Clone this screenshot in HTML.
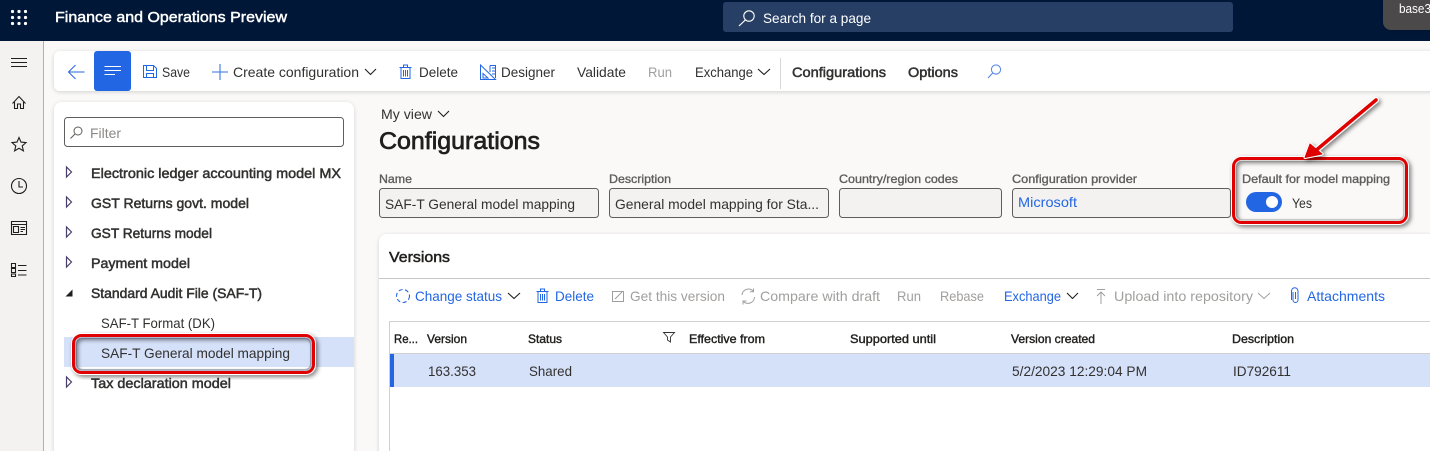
<!DOCTYPE html>
<html lang="en"><head><meta charset="utf-8"><title>Configurations</title>
<style>
html,body{margin:0;padding:0;width:1430px;height:451px;overflow:hidden;background:#faf9f8}
svg{display:block}
text{font-family:"Liberation Sans",sans-serif;font-size:14px;fill:#323130;white-space:pre}
.sb{stroke:#323130;stroke-width:.5px}
.d{fill:#a19f9d}
.b{fill:#2266e3}
.k{fill:#201f1e}
.l{font-size:12px;fill:#605e5c;stroke:#605e5c;stroke-width:.35px}
.h{font-size:12px;fill:#201f1e;stroke:#201f1e;stroke-width:.4px}
.ic{fill:none;stroke:#2266e3;stroke-width:1}
.ig{fill:none;stroke:#a19f9d;stroke-width:1}
.ir{fill:none;stroke:#201f1e;stroke-width:1.1}
.f{fill:#f3f2f1;stroke:#605e5c;stroke-width:1}
</style></head><body>
<svg width="1430" height="451" viewBox="0 0 1430 451" xmlns="http://www.w3.org/2000/svg">
<defs>
<filter id="s1" x="-5%" y="-30%" width="110%" height="170%"><feDropShadow dx="0" dy="1" stdDeviation="2" flood-color="#000" flood-opacity=".16"/></filter>
<filter id="s2" x="-20%" y="-20%" width="140%" height="140%"><feDropShadow dx="2" dy="2" stdDeviation="2" flood-color="#000" flood-opacity=".5"/></filter>
</defs>
<rect width="1430" height="451" fill="#faf9f8"/>
<!-- rail -->
<rect x="0" y="41" width="43" height="410" fill="#f3f2f1"/>
<rect x="43" y="41" width="1" height="410" fill="#b3b0ad"/>
<!-- top bar -->
<rect width="1430" height="41" fill="#001738"/>
<g fill="#fff"><circle cx="12.5" cy="11.5" r="1.6"/><circle cx="19" cy="11.5" r="1.6"/><circle cx="25.5" cy="11.5" r="1.6"/><circle cx="12.5" cy="17.5" r="1.6"/><circle cx="19" cy="17.5" r="1.6"/><circle cx="25.5" cy="17.5" r="1.6"/><circle cx="12.5" cy="23.5" r="1.6"/><circle cx="19" cy="23.5" r="1.6"/><circle cx="25.5" cy="23.5" r="1.6"/></g>
<text x="55" y="22" textLength="232" lengthAdjust="spacingAndGlyphs" style="font-size:15px;fill:#fff;stroke:#fff;stroke-width:.45px">Finance and Operations Preview</text>
<rect x="723" y="2" width="510" height="30" rx="3" fill="#273f64"/>
<circle cx="749" cy="16" r="5.2" fill="none" stroke="#fff" stroke-width="1.1"/><path d="M745.3 20L739 26" stroke="#fff" stroke-width="1.2" fill="none"/>
<text x="763" y="23" textLength="108" lengthAdjust="spacingAndGlyphs" style="fill:#fff">Search for a page</text>
<path d="M1383 -2H1430V30H1391a8 8 0 0 1-8-8Z" fill="#4b4a49" filter="url(#s1)"/>
<text x="1399" y="13" textLength="32" lengthAdjust="spacingAndGlyphs" style="font-size:12.5px;fill:#fff">base3</text>
<!-- rail icons -->
<path d="M11 58.5H27M11 62.5H27M11 66.5H27" stroke="#201f1e" stroke-width="1"/>
<path class="ir" d="M12.5 103.5L19 96.5L25.5 103.5M14.5 102V108.5H17.5V104H20.5V108.5H23.5V102"/>
<path class="ir" d="M19 137.5l2 4.6 5 .5-3.8 3.3 1.2 5-4.4-2.6-4.4 2.6 1.2-5-3.8-3.3 5-.5z"/>
<circle class="ir" cx="19" cy="186" r="7.5"/><path class="ir" d="M19 181V187H23"/>
<path class="ir" d="M11.5 221.5H26.5V234.5H11.5ZM11.5 224.5H26.5"/><path class="ir" d="M13.5 226.5H18.5V232.5H13.5ZM20.5 227.5H25M20.5 229.5H25M20.5 231.5H23" stroke-width=".9"/>
<path class="ir" d="M11.5 263.5H15.5V267.5H11.5ZM11.5 268.5H15.5V272.5H11.5ZM11.5 274H15.5V276.5H11.5ZM18 265.5H26.5M18 270.5H26.5M18 275H26.5" stroke-width=".9"/>
<!-- action bar -->
<rect x="54" y="51" width="1390" height="40" rx="6" fill="#fff" filter="url(#s1)"/>
<path class="ic" d="M84.5 72H68.5M75.5 65L68.5 72L75.5 79" stroke="#5b8ae8" stroke-width="1.2"/>
<rect x="94" y="51" width="37" height="40" rx="3" fill="#2266e3"/>
<path d="M104.5 66.5H121M104.5 70.5H121M104.5 74.5H115" stroke="#fff" stroke-width="1" fill="none"/>
<path class="ic" d="M143.5 65.5H153.5L156.5 68.5V77.5H143.5ZM146.5 65.5V70.5H153.5V65.5M146.5 77.5V73.5H153.5V77.5"/>
<text x="162" y="77" textLength="28" lengthAdjust="spacingAndGlyphs">Save</text>
<path d="M212 72H228M220 64V80" stroke="#5b8ae8" stroke-width="1.3" fill="none"/>
<text x="233" y="77" textLength="126" lengthAdjust="spacingAndGlyphs">Create configuration</text>
<path d="M365 69L370.5 74.5L376 69" class="ir" stroke="#323130"/>
<path class="ic" d="M399.5 67.5H411.5M401 67.5V78.5H410V67.5M403.5 67.5V65H407.5V67.5M403.5 70V76.5M405.5 70V76.5M407.5 70V76.5"/>
<text x="419" y="77" textLength="39" lengthAdjust="spacingAndGlyphs">Delete</text>
<path class="ic" d="M480.5 65L495.5 79.5H480.5ZM483 73.5L488 78H483ZM490 65.5H495.5V78M490 65.5V72M492 68H495M492 71H495M492 74H495"/>
<text x="501" y="77" textLength="54" lengthAdjust="spacingAndGlyphs">Designer</text>
<text x="577" y="77" textLength="49" lengthAdjust="spacingAndGlyphs">Validate</text>
<text class="d" x="648" y="77" textLength="24" lengthAdjust="spacingAndGlyphs">Run</text>
<text x="695" y="77" textLength="58" lengthAdjust="spacingAndGlyphs">Exchange</text>
<path d="M758 69L764 74.5L770 69" class="ir" stroke="#323130"/>
<rect x="780" y="58" width="1" height="31" fill="#d8d6d4"/>
<text class="sb" x="792" y="77" textLength="94" lengthAdjust="spacingAndGlyphs">Configurations</text>
<text class="sb" x="908" y="77" textLength="50" lengthAdjust="spacingAndGlyphs">Options</text>
<circle cx="996" cy="69.5" r="4.6" fill="none" stroke="#5b8ae8" stroke-width="1.1"/><path d="M992.7 73L988 78" stroke="#5b8ae8" stroke-width="1.2" fill="none"/>
<!-- left panel -->
<path d="M54 110a8 8 0 0 1 8-8H346a8 8 0 0 1 8 8V460H54Z" fill="#fff" filter="url(#s1)"/>
<rect x="64.5" y="117.5" width="279" height="29" rx="3" fill="#fff" stroke="#605e5c"/>
<circle cx="78" cy="131" r="4" fill="none" stroke="#605e5c"/><path d="M75 134L70.5 138.5" stroke="#605e5c" fill="none" stroke-width="1.1"/>
<text x="90" y="138" textLength="31" lengthAdjust="spacingAndGlyphs" style="fill:#8a8886">Filter</text>
<rect x="64" y="337" width="290" height="30" fill="#d5e1f9"/>
<g fill="none" stroke="#4a3f6b" stroke-width="1.2"><path d="M66.5 167V177L71.5 172Z"/><path d="M66.5 197V207L71.5 202Z"/><path d="M66.5 227V237L71.5 232Z"/><path d="M66.5 257V267L71.5 262Z"/><path d="M66.5 377V387L71.5 382Z"/></g>
<path d="M65.5 296.5H72.5V289.5Z" fill="#201f1e"/>
<text class="sb" x="91" y="178" textLength="250" lengthAdjust="spacingAndGlyphs">Electronic ledger accounting model MX</text>
<text class="sb" x="91" y="208" textLength="158" lengthAdjust="spacingAndGlyphs">GST Returns govt. model</text>
<text class="sb" x="91" y="238" textLength="121" lengthAdjust="spacingAndGlyphs">GST Returns model</text>
<text class="sb" x="91" y="268" textLength="99" lengthAdjust="spacingAndGlyphs">Payment model</text>
<text class="sb" x="91" y="298" textLength="171" lengthAdjust="spacingAndGlyphs">Standard Audit File (SAF-T)</text>
<text x="101" y="328" textLength="114" lengthAdjust="spacingAndGlyphs">SAF-T Format (DK)</text>
<text x="101" y="358" textLength="189" lengthAdjust="spacingAndGlyphs">SAF-T General model mapping</text>
<text class="sb" x="91" y="388" textLength="140" lengthAdjust="spacingAndGlyphs">Tax declaration model</text>
<!-- header -->
<text x="381" y="119" textLength="51" lengthAdjust="spacingAndGlyphs">My view</text>
<path d="M438 111L443.5 116.5L449 111" class="ir" stroke="#323130"/>
<text x="379" y="149" textLength="161" lengthAdjust="spacingAndGlyphs" style="font-size:24px;fill:#201f1e;stroke:#201f1e;stroke-width:.7px">Configurations</text>
<text class="l" x="379" y="183" textLength="33" lengthAdjust="spacingAndGlyphs">Name</text>
<text class="l" x="609" y="183" textLength="62" lengthAdjust="spacingAndGlyphs">Description</text>
<text class="l" x="839" y="183" textLength="119" lengthAdjust="spacingAndGlyphs">Country/region codes</text>
<text class="l" x="1012" y="183" textLength="125" lengthAdjust="spacingAndGlyphs">Configuration provider</text>
<rect class="f" x="379.5" y="188.5" width="219" height="29" rx="3"/>
<rect class="f" x="609.5" y="188.5" width="219" height="29" rx="3"/>
<rect class="f" x="839.5" y="188.5" width="162" height="29" rx="3"/>
<rect class="f" x="1012.5" y="188.5" width="218" height="29" rx="3"/>
<text x="385" y="209" textLength="190" lengthAdjust="spacingAndGlyphs">SAF-T General model mapping</text>
<text x="615" y="209" textLength="204" lengthAdjust="spacingAndGlyphs">General model mapping for Sta...</text>
<text class="b" x="1018" y="207" textLength="59" lengthAdjust="spacingAndGlyphs">Microsoft</text>
<text class="l" x="1242" y="183" textLength="148" lengthAdjust="spacingAndGlyphs">Default for model mapping</text>
<rect x="1246" y="192" width="36" height="20" rx="10" fill="#2266e3"/>
<circle cx="1272" cy="202" r="6" fill="#fff"/>
<text x="1292" y="208" textLength="20" lengthAdjust="spacingAndGlyphs">Yes</text>
<!-- versions panel -->
<path d="M379 242a8 8 0 0 1 8-8H1440V460H379Z" fill="#fff" filter="url(#s1)"/>
<text x="389" y="262" textLength="61" lengthAdjust="spacingAndGlyphs" style="font-size:15px;fill:#201f1e;stroke:#201f1e;stroke-width:.5px">Versions</text>
<rect x="379" y="278" width="1051" height="1" fill="#c8c6c4"/>
<circle cx="403" cy="296" r="6.5" fill="none" stroke="#2266e3" stroke-width="1.1" stroke-dasharray="4 2.5"/>
<text class="b" x="415" y="301" textLength="87" lengthAdjust="spacingAndGlyphs">Change status</text>
<path d="M508 293L514 298.5L520 293" class="ir" stroke="#323130"/>
<path class="ic" d="M536.5 291.5H548.5M538 291.5V302.5H547V291.5M540.5 291.5V289H544.5V291.5M540.5 294V300.5M542.5 294V300.5M544.5 294V300.5"/>
<text class="b" x="555" y="301" textLength="39" lengthAdjust="spacingAndGlyphs">Delete</text>
<path class="ig" d="M612.5 291.5H623.5V301.5H612.5ZM615 299L622 292"/>
<text class="d" x="630" y="301" textLength="95" lengthAdjust="spacingAndGlyphs">Get this version</text>
<path class="ig" d="M742 295a6.5 6.5 0 0 1 11.5-3.5M754.5 297a6.5 6.5 0 0 1-11.5 4M753.5 288.5V291.8H750M743 304.5V301H746.5"/>
<text class="d" x="760" y="301" textLength="120" lengthAdjust="spacingAndGlyphs">Compare with draft</text>
<text class="d" x="897" y="301" textLength="24" lengthAdjust="spacingAndGlyphs">Run</text>
<text class="d" x="940" y="301" textLength="44" lengthAdjust="spacingAndGlyphs">Rebase</text>
<text class="b" x="1004" y="301" textLength="57" lengthAdjust="spacingAndGlyphs">Exchange</text>
<path d="M1067 293L1072.5 298.5L1078 293" class="ir" stroke="#323130"/>
<path class="ig" d="M1097 289.5H1105M1101 304V292M1097 296L1101 292L1105 296"/>
<text class="d" x="1114" y="301" textLength="139" lengthAdjust="spacingAndGlyphs">Upload into repository</text>
<path d="M1258 293L1264 298.5L1270 293" class="ig"/>
<path class="ic" d="M1293 292V300a2.5 2.5 0 0 0 5 0V291a3 3 0 0 0-6.5 0V300M1295.5 292V299"/>
<text class="b" x="1307" y="301" textLength="78" lengthAdjust="spacingAndGlyphs">Attachments</text>
<!-- grid -->
<path d="M389.5 451V321.5H1430" fill="none" stroke="#d2d0ce"/>
<rect x="390" y="353" width="1040" height="1" fill="#d2d0ce"/>
<text class="h" x="394" y="343" textLength="24" lengthAdjust="spacingAndGlyphs">Re...</text>
<text class="h" x="427" y="343" textLength="40" lengthAdjust="spacingAndGlyphs">Version</text>
<text class="h" x="528" y="343" textLength="34" lengthAdjust="spacingAndGlyphs">Status</text>
<path d="M663.5 332.5H674.5L670.5 337V342L667.5 340V337Z" fill="none" stroke="#323130" stroke-width=".9"/>
<text class="h" x="689" y="343" textLength="76" lengthAdjust="spacingAndGlyphs">Effective from</text>
<text class="h" x="850" y="343" textLength="86" lengthAdjust="spacingAndGlyphs">Supported until</text>
<text class="h" x="1011" y="343" textLength="84" lengthAdjust="spacingAndGlyphs">Version created</text>
<text class="h" x="1232" y="343" textLength="62" lengthAdjust="spacingAndGlyphs">Description</text>
<rect x="390" y="354" width="1040" height="33" fill="#d5e1f9"/>
<rect x="390" y="354" width="4" height="33" fill="#2266e3"/>
<text x="428" y="376" textLength="48" lengthAdjust="spacingAndGlyphs">163.353</text>
<text x="529" y="376" textLength="43" lengthAdjust="spacingAndGlyphs">Shared</text>
<text x="1012" y="376" textLength="135" lengthAdjust="spacingAndGlyphs">5/2/2023 12:29:04 PM</text>
<text x="1233" y="376" textLength="58" lengthAdjust="spacingAndGlyphs">ID792611</text>
<!-- annotation: highlight 1 -->
<g filter="url(#s2)">
<rect x="73.5" y="335.5" width="240" height="37" rx="8" fill="none" stroke="#fff" stroke-width="5"/>
<rect x="73.5" y="335.5" width="240" height="37" rx="8" fill="none" stroke="#e00000" stroke-width="3"/>
</g>
<rect x="76" y="338" width="235" height="32" rx="6" fill="none" stroke="#55607a" stroke-opacity=".45" stroke-width="2"/>
<!-- annotation: highlight 2 -->
<g filter="url(#s2)">
<rect x="1233.5" y="158.5" width="173" height="64" rx="8" fill="none" stroke="#fff" stroke-width="5"/>
<rect x="1233.5" y="158.5" width="173" height="64" rx="8" fill="none" stroke="#e00000" stroke-width="3"/>
</g>
<rect x="1236" y="161" width="168" height="59" rx="6" fill="none" stroke="#777" stroke-opacity=".4" stroke-width="1.5"/>
<!-- arrow -->
<g filter="url(#s2)">
<path d="M1376 100L1314 152" stroke="#fff" stroke-width="6" stroke-linecap="round" fill="none"/>
<path d="M1310 144L1305 157.5L1322 154Z" fill="#fff" stroke="#fff" stroke-width="3" stroke-linejoin="round"/>
</g>
<path d="M1376 100L1314 152" stroke="#e00000" stroke-width="3.5" stroke-linecap="round" fill="none"/>
<path d="M1310 144L1305 157.5L1322 154Z" fill="#e00000" stroke="#e00000" stroke-width="1" stroke-linejoin="round"/>
</svg>
</body></html>
